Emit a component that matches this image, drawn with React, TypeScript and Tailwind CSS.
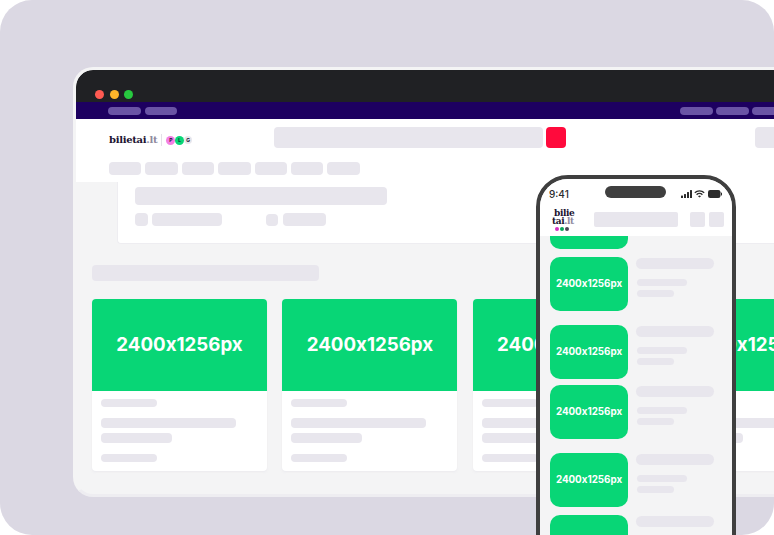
import type { ReactNode } from "react";

const grotesk = "font-['Inter','Liberation_Sans',sans-serif] [font-feature-settings:'calt'_0]";

function Bar({ className = "" }: { className?: string }) {
  return <div className={`shrink-0 bg-[#e8e6ed] ${className}`} />;
}

function BrowserLogo() {
  return (
    <div className="mt-[6px] flex h-[14px] items-center">
      <span className="font-['DejaVu_Serif',serif] text-[10px] font-bold leading-none tracking-[-0.3px] text-[#1b1330]">
        bilietai<span className="text-[#8f8a9e]">.lt</span>
      </span>
      <div className="ml-[4px] h-[12px] w-px bg-[#e3e1e8]" />
      <div className="ml-[4px] flex font-['Inter',sans-serif] text-[5px] font-bold leading-none text-[#1b1330]">
        <span className="grid size-[9px] place-items-center rounded-full bg-[#f47fe3]">P</span>
        <span className="grid size-[9px] place-items-center rounded-full bg-[#08d676]">L</span>
        <span className="grid size-[8px] place-items-center self-center rounded-full bg-[#e8e6ed]">G</span>
      </div>
    </div>
  );
}

function EventCard() {
  return (
    <div className="w-[175px] shrink-0 overflow-hidden rounded-[4px] bg-white shadow-[0_1px_2px_rgba(219,216,227,0.35)]">
      <div
        className={`flex h-[92px] items-center justify-center bg-[#08d676] pt-[1px] text-[18.7px] font-bold text-white ${grotesk}`}
      >
        2400x1256px
      </div>
      <div className="flex h-[80px] flex-col items-start px-[9px] pt-[8px]">
        <Bar className="h-[8px] w-[56px] rounded-full" />
        <Bar className="mt-[11px] h-[10px] w-[135px] rounded-[4px]" />
        <Bar className="mt-[5px] h-[10px] w-[71px] rounded-[4px]" />
        <Bar className="mt-[11px] h-[8px] w-[56px] rounded-full" />
      </div>
    </div>
  );
}

function PhoneRow({ marginTop, children }: { marginTop: string; children?: ReactNode }) {
  return (
    <div className={`flex shrink-0 gap-[8px] ${marginTop}`}>
      <div
        className={`flex h-[54px] w-[78px] shrink-0 items-center justify-center rounded-[10px] bg-[#08d676] text-[9.8px] font-bold text-white ${grotesk}`}
      >
        2400x1256px
      </div>
      <div className="flex flex-col items-start pt-[1px]">
        <Bar className="h-[11px] w-[78px] rounded-full" />
        <Bar className="ml-px mt-[10px] h-[7px] w-[50px] rounded-full" />
        <Bar className="ml-px mt-[4px] h-[7px] w-[37px] rounded-full" />
        {children}
      </div>
    </div>
  );
}

function StatusIcons() {
  return (
    <div className="flex items-center gap-[2px]">
      <svg width="11" height="8" viewBox="0 0 11 8" fill="#2b2b2b">
        <rect x="0" y="5.5" width="2" height="2.5" rx="0.5" />
        <rect x="3" y="4" width="2" height="4" rx="0.5" />
        <rect x="6" y="2" width="2" height="6" rx="0.5" />
        <rect x="9" y="0" width="2" height="8" rx="0.5" />
      </svg>
      <svg width="11" height="8" viewBox="0 0 11 8" fill="none" stroke="#2b2b2b" strokeWidth="1.3">
        <path d="M.8 2.8a6.6 6.6 0 0 1 9.4 0" />
        <path d="M2.6 4.7a4 4 0 0 1 5.8 0" />
        <path d="M5.5 7.6 4 6.2a2.1 2.1 0 0 1 3 0z" fill="#2b2b2b" stroke="none" />
      </svg>
      <svg className="ml-[1px]" width="14" height="8" viewBox="0 0 14 8" fill="#2b2b2b">
        <rect x="0" y="0" width="12.5" height="8" rx="2.2" />
        <rect x="13" y="2.5" width="1" height="3" rx="0.5" />
      </svg>
    </div>
  );
}

function Phone() {
  return (
    <div className="absolute left-[536px] top-[175px] h-[400px] w-[200px] overflow-hidden rounded-[32px] border-[4px] border-[#3f3f3f] bg-[#f4f4f5]">
      <div className="relative flex h-[24px] items-center justify-between bg-white pl-[9px] pr-[10px] pt-[6px]">
        <span className="font-['Inter',sans-serif] text-[10px] font-medium leading-none text-[#2b2b2b]">9:41</span>
        <div className="absolute left-[65px] top-[7px] h-[12px] w-[61px] rounded-full bg-[#3f3f3f]" />
        <StatusIcons />
      </div>
      <div className="flex h-[33px] items-center bg-white pl-[12px] pr-[8px]">
        <div className="flex w-[42px] shrink-0 flex-col items-start">
          <div className="font-['DejaVu_Serif',serif] text-[9px] font-bold leading-[8px] tracking-[-0.4px] text-[#1b1330]">
            <div className="ml-[2px]">bilie</div>
            <div>
              tai<span className="text-[#8f8a9e]">.lt</span>
            </div>
          </div>
          <div className="ml-[3px] mt-[2px] flex gap-px">
            <span className="size-[4px] rounded-full bg-[#d62fc0]" />
            <span className="size-[4px] rounded-full bg-[#08a65c]" />
            <span className="size-[4px] rounded-full bg-[#4a4658]" />
          </div>
        </div>
        <Bar className="h-[15px] w-[84px] rounded-[2px]" />
        <Bar className="ml-[12px] size-[15px] rounded-[2px]" />
        <Bar className="ml-[4px] size-[15px] rounded-[2px]" />
      </div>
      <div className="flex flex-col px-[10px]">
        <div className="h-[13px] w-[78px] rounded-b-[10px] bg-[#08d676]" />
        <PhoneRow marginTop="mt-[8px]" />
        <PhoneRow marginTop="mt-[14px]" />
        <PhoneRow marginTop="mt-[6px]" />
        <PhoneRow marginTop="mt-[14px]" />
        <PhoneRow marginTop="mt-[8px]" />
      </div>
    </div>
  );
}

export default function App() {
  const topPills = ["w-[33px]", "w-[32px]"];
  const navPills = ["w-[32px]", "w-[33px]", "w-[32px]", "w-[33px]", "w-[32px]", "w-[32px]", "w-[33px]"];

  return (
    <div className="relative h-[535px] w-[774px] overflow-hidden rounded-[32px] bg-[#dbd8e3] pl-[73px] pt-[67px]">
      <div className="h-[430px] w-[760px] overflow-hidden rounded-[20px] border-[3px] border-[#f4f4f5] border-b-[#eeedf1] bg-[#f4f4f5]">
        {/* window chrome */}
        <div className="flex h-[32px] items-end gap-[5.5px] rounded-t-[17px] bg-[#202124] pb-[3px] pl-[19px]">
          <span className="size-[9px] rounded-full bg-[#ff5a52]" />
          <span className="size-[9px] rounded-full bg-[#fdb52a]" />
          <span className="size-[9px] rounded-full bg-[#27c93f]" />
        </div>

        {/* purple top strip */}
        <div className="flex h-[17px] items-center bg-[#1d0060] pl-[32px]">
          <div className="flex gap-[4px]">
            {topPills.map((w, i) => (
              <div key={i} className={`h-[8px] rounded-full bg-[#6a54a5] ${w}`} />
            ))}
          </div>
          <div className="ml-[503px] flex gap-[3px]">
            <div className="h-[8px] w-[33px] shrink-0 rounded-full bg-[#6a54a5]" />
            <div className="h-[8px] w-[33px] shrink-0 rounded-full bg-[#6a54a5]" />
            <div className="h-[8px] w-[33px] shrink-0 rounded-full bg-[#6a54a5]" />
          </div>
        </div>

        {/* site header */}
        <div className="h-[63px] bg-white pl-[33px] pt-[8px]">
          <div className="flex items-start">
            <div className="w-[165px] shrink-0">
              <BrowserLogo />
            </div>
            <Bar className="h-[21px] w-[269px] rounded-[4px]" />
            <div className="ml-[3px] h-[21px] w-[20px] rounded-[4px] bg-[#ff0a3c]" />
            <Bar className="ml-[189px] h-[21px] w-[40px] rounded-[4px]" />
          </div>
          <div className="mt-[14px] flex gap-[4px]">
            {navPills.map((w, i) => (
              <Bar key={i} className={`h-[13px] rounded-[4px] ${w}`} />
            ))}
          </div>
        </div>

        {/* page body */}
        <div className="px-[16px]">
          <div className="ml-[25px] h-[62px] rounded-b-[4px] border-b border-l border-[#eeedf1] bg-white pl-[17px] pt-[5px]">
            <Bar className="h-[18px] w-[252px] rounded-[4px]" />
            <div className="mt-[8px] flex items-center">
              <Bar className="size-[13px] rounded-[4px]" />
              <Bar className="ml-[4px] h-[13px] w-[70px] rounded-[4px]" />
              <Bar className="ml-[44px] size-[12px] rounded-[4px]" />
              <Bar className="ml-[5px] h-[13px] w-[43px] rounded-[4px]" />
            </div>
          </div>
          <Bar className="mt-[21px] h-[16px] w-[227px] rounded-[4px]" />
          <div className="mt-[18px] flex gap-[15.4px]">
            <EventCard />
            <EventCard />
            <EventCard />
            <EventCard />
          </div>
        </div>
      </div>
      <Phone />
    </div>
  );
}
